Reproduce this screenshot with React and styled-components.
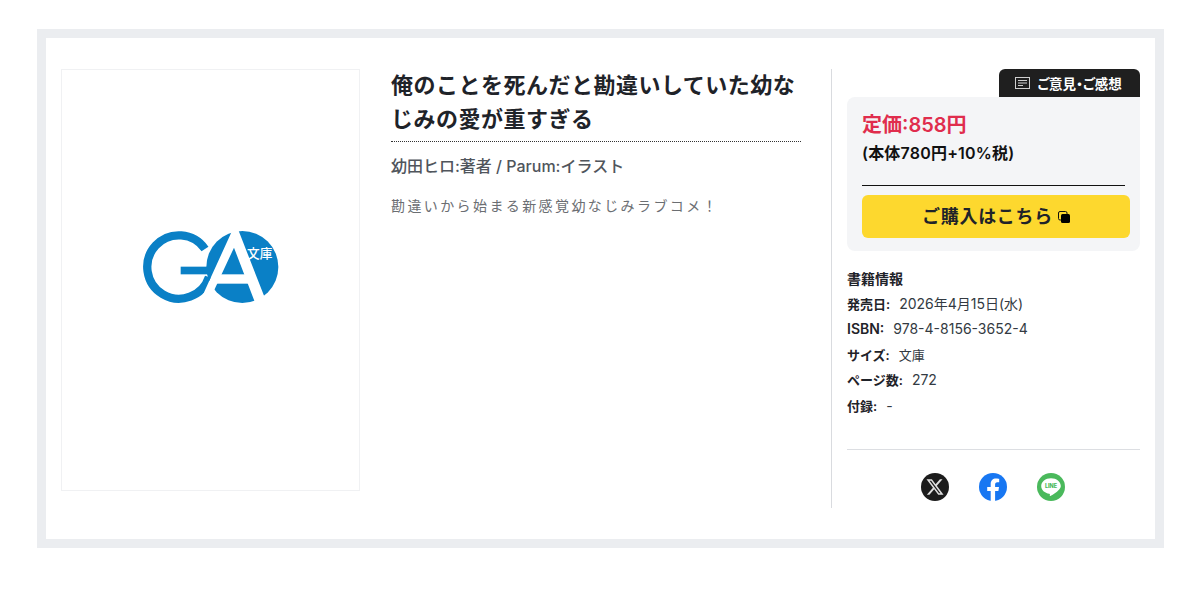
import React from "react";
import styled, { createGlobalStyle } from "styled-components";

const GlobalStyle = createGlobalStyle`
  html, body {
    margin: 0;
    padding: 0;
    background: #fff;
    font-family: Inter, "Noto Sans CJK JP", sans-serif;
    color: #1f2937;
  }
`;

const Styled = {
  Frame: styled.div`
    box-sizing: border-box;
    width: 1127px;
    height: 519px;
    margin: 29px 0 0 37px;
    padding: 31px 15px;
    border: 9px solid #ebedf0;
    display: grid;
    grid-template-columns: 299px 410px 309px;
    column-gap: 31px;
    align-items: start;
  `,
  Cover: styled.div`
    box-sizing: border-box;
    height: 422px;
    padding: 0 3px 28px 0;
    border: 1px solid #f0f1f3;
    display: flex;
    align-items: center;
    justify-content: center;
  `,
  Middle: styled.div`
    display: flex;
    flex-direction: column;
  `,
  Title: styled.h1`
    margin: -1px 0 0;
    padding-bottom: 5px;
    border-bottom: 1px dotted #333;
    font-size: 22px;
    line-height: 34px;
    font-weight: 600;
    letter-spacing: 0.5px;
    color: #1f2329;
  `,
  Author: styled.div`
    margin-top: 13px;
    font-size: 16px;
    line-height: 22px;
    font-weight: 500;
    color: #50555c;
  `,
  Description: styled.p`
    margin: 18px 0 0;
    font-size: 14px;
    line-height: 22px;
    letter-spacing: 2.4px;
    color: #6b6e72;
  `,
  Side: styled.aside`
    box-sizing: border-box;
    width: 309px;
    margin-left: -1px;
    height: 439px;
    padding-left: 15px;
    border-left: 1px solid #d9dbdf;
    display: flex;
    flex-direction: column;
  `,
  FeedbackTab: styled.a`
    box-sizing: border-box;
    align-self: flex-end;
    width: 141px;
    height: 28px;
    padding: 0 2px 1px 0;
    border-radius: 6px 6px 0 0;
    background: #1f1f1f;
    color: #fff;
    font-size: 13.5px;
    font-weight: 600;
    font-feature-settings: "palt";
    display: flex;
    align-items: center;
    justify-content: center;
    gap: 7px;
  `,
  PriceBox: styled.div`
    box-sizing: border-box;
    height: 154px;
    padding: 15px 10px 0 15px;
    border-radius: 8px 0 8px 8px;
    background: #f4f5f7;
    display: flex;
    flex-direction: column;
  `,
  Price: styled.div`
    font-size: 20px;
    line-height: 26px;
    font-weight: 600;
    color: #e02d4d;
  `,
  PriceNote: styled.div`
    margin-top: 5px;
    font-size: 16px;
    line-height: 20px;
    letter-spacing: 0.2px;
    font-weight: 600;
    color: #111;
  `,
  PriceRule: styled.hr`
    width: 263px;
    margin: 22px 0 9px;
    border: 0;
    border-top: 1px solid #111;
  `,
  BuyButton: styled.a`
    box-sizing: border-box;
    height: 43px;
    padding-bottom: 3px;
    border-radius: 6px;
    background: #fdd82e;
    color: #1f2329;
    font-size: 18px;
    letter-spacing: 0.7px;
    font-weight: 600;
    display: flex;
    align-items: center;
    justify-content: center;
    gap: 5px;
  `,
  BuyIcon: styled.svg`
    margin-top: 3px;
  `,
  InfoTitle: styled.div`
    margin-top: 18px;
    font-size: 14px;
    line-height: 20px;
    font-weight: 700;
    color: #1f2329;
  `,
  InfoList: styled.dl`
    margin: 1.5px 0 0;
    display: flex;
    flex-direction: column;
  `,
  InfoRow: styled.div`
    height: 25.5px;
    display: flex;
    align-items: center;
    gap: 9px;
    font-size: 14px;
    color: #333a42;
  `,
  InfoLabel: styled.dt`
    font-size: ${(props) => (props.$latin ? "14px" : "13px")};
    font-weight: 600;
    color: #1f2329;
  `,
  InfoValue: styled.dd`
    margin: 0;
    font-size: ${(props) => (props.$cjk ? "13px" : "14px")};
  `,
  Social: styled.div`
    margin-top: auto;
    padding: 23px 2px 7px 0;
    border-top: 1px solid #dcdee2;
    display: flex;
    justify-content: center;
    gap: 30px;
  `,
};

const GaLogo = () => (
  <svg width="160" height="90" viewBox="0 0 480 270">
    <defs>
      <clipPath id="ga-left">
        <polygon points="0,0 322,0 231,201 200,270 0,270" />
      </clipPath>
    </defs>
    <circle cx="340" cy="138" r="108" fill="#0a80c6" />
    <polygon points="309,30 205,258 232,258 315,80 380,250 408,232 326,22" fill="#fff" />
    <rect x="258" y="160" width="110" height="28" fill="#fff" />
    <g clipPath="url(#ga-left)">
      <path
        d="M228 84 A95 95 0 1 0 240 168"
        fill="none"
        stroke="#0a80c6"
        strokeWidth="25"
      />
      <rect x="155" y="137" width="85" height="23" fill="#0a80c6" />
    </g>
    <text
      x="354"
      y="112"
      fill="#fff"
      fontSize="38"
      fontWeight="500"
      fontFamily="'Noto Sans CJK JP', sans-serif"
    >
      文庫
    </text>
  </svg>
);

const NoteIcon = () => (
  <svg width="15" height="12" viewBox="0 0 15 12" fill="none" stroke="#d0d0d0">
    <rect x="0.5" y="0.5" width="14" height="11" strokeWidth="1" />
    <path d="M3 3.500h9M3 6h9M3 8.500h5" strokeWidth="1" />
  </svg>
);

const ExternalIcon = () => (
  <Styled.BuyIcon width="12" height="12" viewBox="0 0 12 12">
    <rect x="0.5" y="0.5" width="8.500" height="8.500" rx="1.500" fill="none" stroke="#111" />
    <rect x="3" y="3" width="9" height="9" rx="1.500" fill="#000" />
  </Styled.BuyIcon>
);

const XIcon = () => (
  <svg width="28" height="28" viewBox="0 0 28 28">
    <circle cx="14" cy="14" r="14" fill="#1c1c1c" />
    <g transform="translate(5.500 5.500) scale(0.71)">
      <path
        fill="#e0e0e0"
        d="M18.901 1.153h3.68l-8.04 9.19L24 22.846h-7.406l-5.8-7.584-6.638 7.584H.474l8.6-9.83L0 1.154h7.594l5.243 6.932ZM17.61 20.644h2.039L6.486 3.24H4.298Z"
      />
    </g>
  </svg>
);

const FacebookIcon = () => (
  <svg width="28" height="28" viewBox="0 0 28 28">
    <circle cx="14" cy="14" r="14" fill="#1877f2" />
    <path
      fill="#fff"
      d="M19.4 18l.6-4h-3.9v-2.6c0-1.1.5-2.2 2.3-2.2h1.8V5.8s-1.6-.3-3.2-.3c-3.2 0-5.3 2-5.3 5.500V14H8.200v4h3.500v10h4.400V18z"
    />
  </svg>
);

const LineIcon = () => (
  <svg width="28" height="28" viewBox="0 0 28 28">
    <circle cx="14" cy="14" r="14" fill="#4ab95c" />
    <path
      fill="#fff"
      transform="translate(14 14) scale(1.18) translate(-14 -14)"
      d="M14 6.500c-4.700 0-8.300 3-8.300 6.700 0 3.300 2.900 6.100 6.900 6.600.6.100.5.500.4 1.300-.1.500.2.700.8.400 1.900-1 5.100-3 6.700-4.900 1.200-1.200 1.800-2.400 1.800-3.400 0-3.700-3.600-6.700-8.300-6.700z"
    />
    <text
      x="14"
      y="15.400"
      fill="#4ab95c"
      fontSize="5.500"
      fontWeight="800"
      textAnchor="middle"
      fontFamily="Inter, sans-serif"
    >
      LINE
    </text>
  </svg>
);

const bookInfo = [
  { label: "発売日:", value: "2026年4月15日(水)" },
  { label: "ISBN:", value: "978-4-8156-3652-4", latin: true },
  { label: "サイズ:", value: "文庫", cjk: true },
  { label: "ページ数:", value: "272" },
  { label: "付録:", value: "-" },
];

const App = () => {
  return (
    <>
      <GlobalStyle />
      <Styled.Frame>
        <Styled.Cover>
          <GaLogo />
        </Styled.Cover>

        <Styled.Middle>
          <Styled.Title>俺のことを死んだと勘違いしていた幼なじみの愛が重すぎる</Styled.Title>
          <Styled.Author>幼田ヒロ:著者 / Parum:イラスト</Styled.Author>
          <Styled.Description>勘違いから始まる新感覚幼なじみラブコメ！</Styled.Description>
        </Styled.Middle>

        <Styled.Side>
          <Styled.FeedbackTab>
            <NoteIcon />
            ご意見・ご感想
          </Styled.FeedbackTab>
          <Styled.PriceBox>
            <Styled.Price>定価:858円</Styled.Price>
            <Styled.PriceNote>(本体780円+10%税)</Styled.PriceNote>
            <Styled.PriceRule />
            <Styled.BuyButton>
              ご購入はこちら
              <ExternalIcon />
            </Styled.BuyButton>
          </Styled.PriceBox>

          <Styled.InfoTitle>書籍情報</Styled.InfoTitle>
          <Styled.InfoList>
            {bookInfo.map((item) => (
              <Styled.InfoRow key={item.label}>
                <Styled.InfoLabel $latin={item.latin}>{item.label}</Styled.InfoLabel>
                <Styled.InfoValue $cjk={item.cjk}>{item.value}</Styled.InfoValue>
              </Styled.InfoRow>
            ))}
          </Styled.InfoList>

          <Styled.Social>
            <XIcon />
            <FacebookIcon />
            <LineIcon />
          </Styled.Social>
        </Styled.Side>
      </Styled.Frame>
    </>
  );
};

export default App;
